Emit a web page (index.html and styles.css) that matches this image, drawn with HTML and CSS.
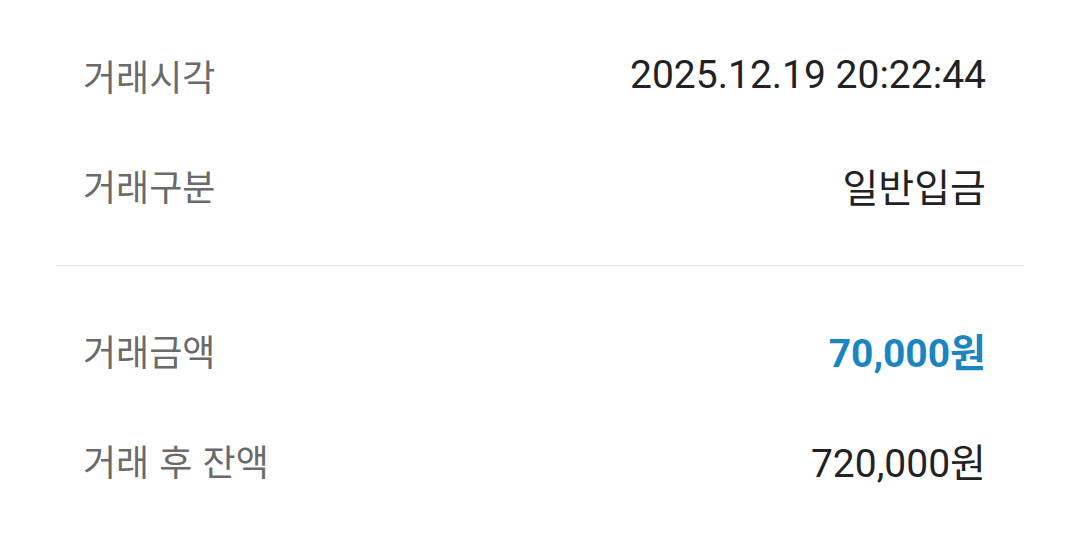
FILE: index.html
```html
<!DOCTYPE html>
<html lang="ko">
<head>
<meta charset="utf-8">
<link rel="stylesheet" href="styles.css">
</head>
<body>
<div class="sheet">
  <section class="group">
    <div class="row"><span class="label">거래시각</span><span class="value">2025.12.19 20:22:44</span></div>
    <div class="row"><span class="label">거래구분</span><span class="value">일반입금</span></div>
  </section>
  <div class="divider"></div>
  <section class="group">
    <div class="row"><span class="label">거래금액</span><span class="value amount">70,000원</span></div>
    <div class="row"><span class="label">거래 후 잔액</span><span class="value">720,000원</span></div>
  </section>
</div>
</body>
</html>
```

FILE: styles.css
```css
html, body {
  margin: 0;
  padding: 0;
  background: #ffffff;
}
.sheet {
  width: 1080px;
  height: 534px;
  padding: 20px 56px 0 56px;
  box-sizing: border-box;
  display: flex;
  flex-direction: column;
  font-family: Roboto, "Noto Sans CJK KR", sans-serif;
}
.group {
  display: flex;
  flex-direction: column;
}
.row {
  height: 110px;
  display: flex;
  align-items: center;
  justify-content: space-between;
  padding: 0 38px 0 27px;
}
.label {
  font-family: "Noto Sans CJK KR", sans-serif;
  font-size: 36px;
  color: #6a6a6a;
}
.value {
  font-size: 39px;
  color: #222222;
}
.amount {
  font-weight: 700;
  color: #1b84c3;
}
.divider {
  height: 1px;
  background: #e9e9e9;
  margin: 25px 0 29px 0;
}
```
